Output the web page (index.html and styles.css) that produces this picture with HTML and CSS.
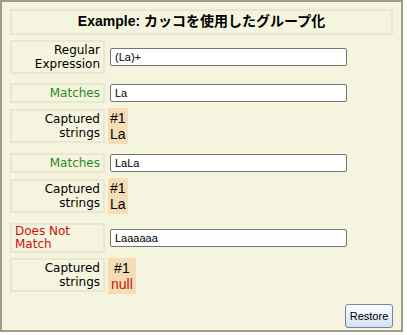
FILE: index.html
```html
<!DOCTYPE html>
<html>
<head>
<meta charset="utf-8">
<link rel="stylesheet" href="styles.css">
</head>
<body>
<div class="panel">
  <div class="title">Example: カッコを使用したグループ化</div>
  <div class="grid">
    <div class="lbl">Regular Expression</div>
    <div class="val"><div class="input">(La)+</div></div>

    <div class="lbl ok grp">Matches</div>
    <div class="val grp"><div class="input">La</div></div>

    <div class="lbl">Captured strings</div>
    <div class="val"><div class="cap"><div class="num">#1</div><div class="str">La</div></div></div>

    <div class="lbl ok grp">Matches</div>
    <div class="val grp"><div class="input">LaLa</div></div>

    <div class="lbl">Captured strings</div>
    <div class="val"><div class="cap"><div class="num">#1</div><div class="str">La</div></div></div>

    <div class="lbl bad grp">Does Not Match</div>
    <div class="val grp"><div class="input">Laaaaaa</div></div>

    <div class="lbl tight">Captured strings</div>
    <div class="val"><div class="cap center"><div class="num">#1</div><div class="str null">null</div></div></div>
  </div>
  <div class="actions"><button class="btn">Restore</button></div>
</div>
</body>
</html>
```
FILE: styles.css
```css
html, body {
  margin: 0;
  padding: 0;
  background: #ffffff;
}

.panel {
  box-sizing: border-box;
  width: 403px;
  height: 332px;
  border: 2px solid #a09c8c;
  background: #f5f4de;
  padding: 7px 8px 4px 8px;
  font-family: "DejaVu Sans", sans-serif;
  font-size: 12px;
  color: #000;
}

.title {
  box-sizing: border-box;
  height: 26px;
  border: 2px solid #e9e7d0;
  text-align: center;
  font-family: "Liberation Sans", "Noto Sans CJK JP", sans-serif;
  font-weight: bold;
  font-size: 14px;
  line-height: 20px;
  margin-bottom: 5px;
}

.grid {
  display: grid;
  grid-template-columns: 95px 1fr;
  column-gap: 3px;
  row-gap: 5px;
  align-items: center;
}

.grp {
  margin-top: 4px;
}

.lbl {
  box-sizing: border-box;
  border: 2px solid #e9e7d0;
  padding: 1px 3px;
  line-height: 14px;
  text-align: right;
}

.lbl.ok {
  color: #2a8a1e;
}

.lbl.bad {
  color: #d01010;
  text-align: left;
  padding: 0 3px;
  line-height: 13px;
}

.lbl.tight {
  margin-top: -2px;
}

.val {
  display: flex;
  align-items: center;
}

.input {
  box-sizing: border-box;
  margin-left: 2px;
  width: 237px;
  height: 18px;
  border: 1px solid #77766c;
  border-radius: 2px;
  background: #fff;
  font-family: "Liberation Sans", sans-serif;
  font-size: 11px;
  line-height: 16px;
  padding: 0 4px;
}

.cap {
  background: #f5deb5;
  padding: 2px 2px;
  font-family: "Liberation Sans", sans-serif;
  font-size: 14px;
  line-height: 16px;
}

.cap.center {
  text-align: center;
  padding: 2px 3px;
}

.str.null {
  color: #d01010;
}

.actions {
  display: flex;
  justify-content: flex-end;
  margin-top: 10px;
}

.btn {
  box-sizing: border-box;
  width: 48px;
  height: 24px;
  border: 1px solid #7088a8;
  border-radius: 3px;
  background: linear-gradient(#fdfeff, #e4ecf8 60%, #d4e0f2);
  font-family: "Liberation Sans", sans-serif;
  font-size: 11px;
  color: #000;
  padding: 0;
}
```
